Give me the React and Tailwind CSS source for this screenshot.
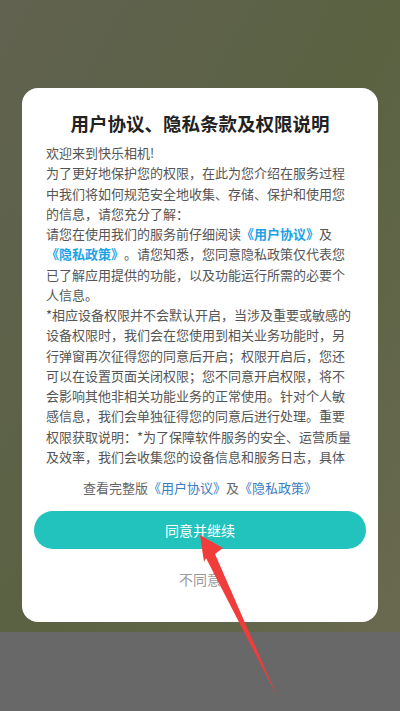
import React from "react";

const font = { fontFamily: '"Noto Sans CJK SC", "Noto Sans", sans-serif' };

const Link = ({ children }) => (
  <span className="text-[#1ea2e6] font-semibold">{children}</span>
);

const App = () => {
  return (
    <div
      className="relative w-[400px] h-[711px] overflow-hidden flex flex-col bg-gradient-to-br from-[#616250] via-[#5a6242] to-[#6b6a52] [text-spacing-trim:space-all]"
      style={font}
    >
      <div className="flex-1 flex flex-col">
        <div className="mt-[88px] mx-[22px] h-[534px] bg-white rounded-[16px] flex flex-col pt-[21px]">
          <h2 className="text-center text-[18.5px] leading-[28px] font-bold text-[#222]">
            用户协议、隐私条款及权限说明
          </h2>
          <div className="mt-[6px] px-[24px] h-[325px] overflow-hidden text-[13px] leading-[20.25px] text-[#555]">
            <p>欢迎来到快乐相机!</p>
            <p>
              为了更好地保护您的权限，在此为您介绍在服务过程中我们将如何规范安全地收集、存储、保护和使用您的信息，请您充分了解：
            </p>
            <p>
              请您在使用我们的服务前仔细阅读<Link>《用户协议》</Link>及<Link>《隐私政策》</Link>。请您知悉，您同意隐私政策仅代表您已了解应用提供的功能，以及功能运行所需的必要个人信息。
            </p>
            <p>
              *相应设备权限并不会默认开启，当涉及重要或敏感的设备权限时，我们会在您使用到相关业务功能时，另行弹窗再次征得您的同意后开启；权限开启后，您还可以在设置页面关闭权限；您不同意开启权限，将不会影响其他非相关功能业务的正常使用。针对个人敏感信息，我们会单独征得您的同意后进行处理。重要权限获取说明：*为了保障软件服务的安全、运营质量及效率，我们会收集您的设备信息和服务日志，具体包括：设备型号、操作系统版本、唯一设备标识符等。
            </p>
          </div>
          <p className="mt-[10px] text-center text-[13px] leading-[20px] text-[#666]">
            查看完整版<span className="text-[#3a7cc0]">《用户协议》</span>及
            <span className="text-[#3a7cc0]">《隐私政策》</span>
          </p>
          <button className="mt-[13px] mx-[12px] h-[38px] rounded-full bg-[#22c3bd] text-white text-[14px]">
            同意并继续
          </button>
          <p className="mt-[20px] text-center text-[14px] leading-[20px] text-[#9a9a9a]">
            不同意
          </p>
        </div>
      </div>
      <div className="h-[79px] bg-[#686868]" />

      <svg
        className="absolute left-0 top-0 pointer-events-none"
        width="400"
        height="711"
        viewBox="0 0 400 711"
      >
        <polygon
          points="200,535 223,548 215,554 277,696 206,558 204,562"
          fill="#f13c3c"
        />
      </svg>
    </div>
  );
};

export default App;
